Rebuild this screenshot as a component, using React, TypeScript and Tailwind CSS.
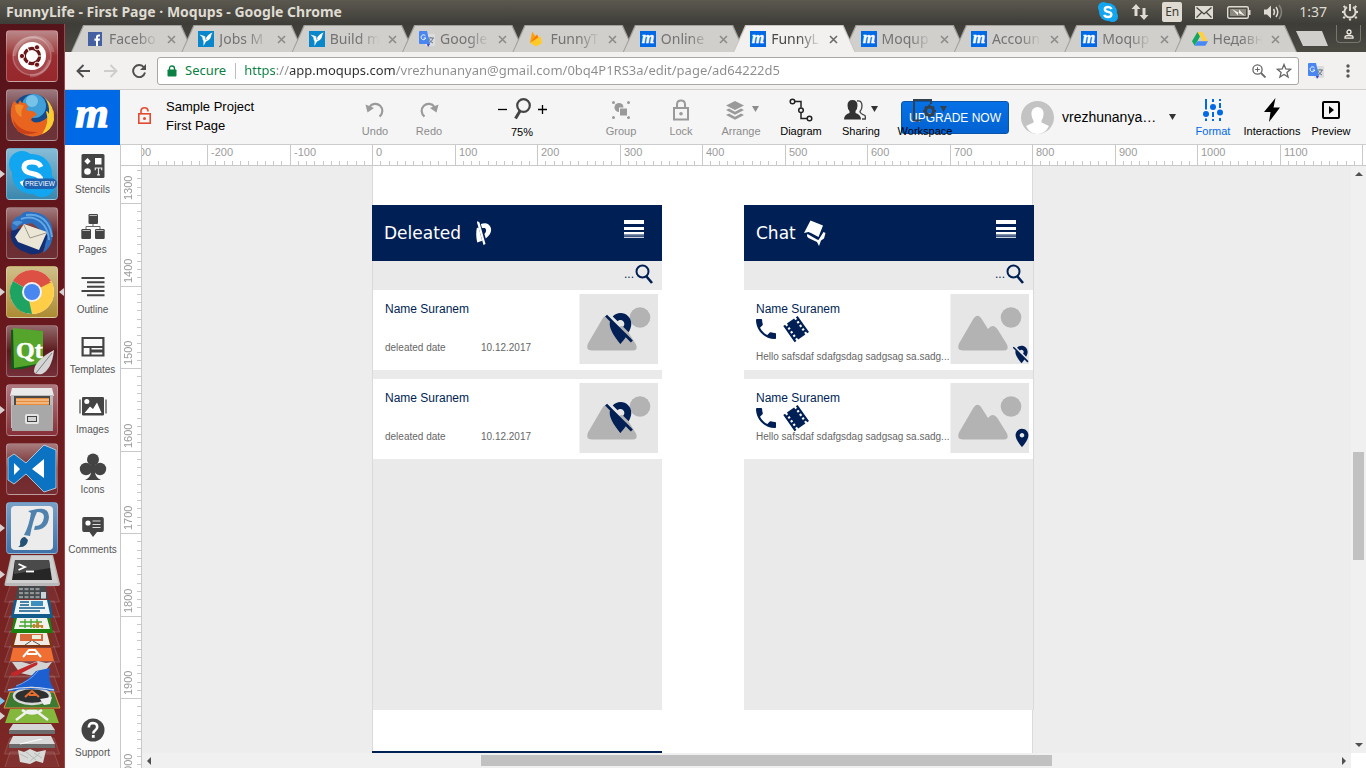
import React from "react";

/* ---------- shared glyphs ---------- */

const PIN_OFF =
  "M12 6.5c1.38 0 2.5 1.12 2.5 2.5 0 .74-.33 1.39-.83 1.85l3.63 3.63c.98-1.86 1.7-3.8 1.7-5.48 0-3.87-3.13-7-7-7-1.98 0-3.76.83-5.04 2.15l3.19 3.19c.46-.52 1.11-.84 1.85-.84zm4.37 9.6l-4.63-4.63-.11-.11L3.27 3 2 4.27l3.18 3.18C5.07 7.95 5 8.47 5 9c0 5.25 7 13 7 13s1.67-1.85 3.38-4.35L18.73 21 20 19.73l-3.63-3.63z";
const PIN_ON =
  "M12 2C8.13 2 5 5.13 5 9c0 5.25 7 13 7 13s7-7.75 7-13c0-3.87-3.13-7-7-7zm0 9.5c-1.38 0-2.5-1.12-2.5-2.5s1.12-2.5 2.5-2.5 2.5 1.12 2.5 2.5-1.12 2.5-2.5 2.5z";
const PHONE =
  "M6.62 10.79c1.44 2.83 3.76 5.14 6.59 6.59l2.2-2.2c.27-.27.67-.36 1.02-.24 1.12.37 2.33.57 3.57.57.55 0 1 .45 1 1V20c0 .55-.45 1-1 1-9.39 0-17-7.61-17-17 0-.55.45-1 1-1h3.5c.55 0 1 .45 1 1 0 1.25.2 2.45.57 3.57.11.35.03.74-.25 1.02l-2.2 2.2z";
const FILM =
  "M18 3v2h-2V3H8v2H6V3H4v18h2v-2h2v2h8v-2h2v2h2V3h-2zM8 17H6v-2h2v2zm0-4H6v-2h2v2zm0-4H6V7h2v2zm10 8h-2v-2h2v2zm0-4h-2v-2h2v2zm0-4h-2V7h2v2z";

function MIcon() {
  return (
    <svg viewBox="0 0 16 16" className="size-4 shrink-0" aria-hidden="true">
      <rect width="16" height="16" fill="#0069e5" />
      <text
        x="8"
        y="12"
        textAnchor="middle"
        fontSize="16"
        fontWeight="bold"
        fontStyle="italic"
        fill="#fff"
        stroke="#fff"
        strokeWidth=".4"
        fontFamily="Liberation Serif, serif"
      >
        m
      </text>
    </svg>
  );
}

function TranslateIcon() {
  return (
    <svg viewBox="0 0 16 16" className="size-4 shrink-0" aria-hidden="true">
      <rect x="6" y="3" width="10" height="12" rx="1" fill="#dcdcdc" />
      <path d="M9 7h6M12 6v1M10 12q3-1 4-5M10 8q1 3 4 4" stroke="#6b7b85" fill="none" />
      <path d="M1 0h7l3 13H1Q0 13 0 12V1Q0 0 1 0Z" fill="#4a86f0" />
      <path d="M8 13h3l-2 3Z" fill="#3246c8" />
      <path d="M6.4 4.8A2.4 2.4 0 1 0 6.8 7H4.7" stroke="#fff" fill="none" />
    </svg>
  );
}

function FacebookIcon() {
  return (
    <svg viewBox="0 0 14 14" className="size-[14px] shrink-0" aria-hidden="true">
      <rect width="14" height="14" fill="#4560a0" />
      <path d="M8 14V8.7H6.4V6.6H8V5.2Q8 2.6 10.6 2.6H12v2h-1.2Q10 4.6 10 5.5v1.1h2l-.3 2.1H10V14Z" fill="#fff" />
    </svg>
  );
}

function FreelancerIcon() {
  return (
    <svg viewBox="0 0 16 16" className="size-4 shrink-0" aria-hidden="true">
      <rect width="16" height="16" fill="#0a87ca" />
      <path d="M1.5 3.5L7 5.2L8 7Q10 3 14.5 1.5L13.5 3.5L12.5 7Q11 10 8 10.5L5.5 15V10Q4 8 4.5 6.5Z" fill="#fff" />
      <path d="M7 5.5L8.2 9" stroke="#0a87ca" strokeWidth=".7" />
    </svg>
  );
}

function FirebaseIcon() {
  return (
    <svg viewBox="0 0 14 16" className="h-4 w-[14px] shrink-0" aria-hidden="true">
      <path d="M1 12L3.2 .8L7 6Z" fill="#ffa000" />
      <path d="M1 12L8 3.5L10 7.5Z" fill="#f57c00" />
      <path d="M1 12L11.5 5L13 12.2L7 15.6Z" fill="#ffca28" />
    </svg>
  );
}

function DriveIcon() {
  return (
    <svg viewBox="0 0 16 14" className="h-[14px] w-4 shrink-0" aria-hidden="true">
      <path d="M5.4 0h5.2L16 9.2h-5.3Z" fill="#ffcf48" />
      <path d="M5.4 0L8 4.6L2.7 13.8L0 9.2Z" fill="#11a861" />
      <path d="M5.4 9.2H16l-2.7 4.6H2.7Z" fill="#4688f4" />
    </svg>
  );
}

/* ---------- desktop panel ---------- */

function TopPanel() {
  return (
    <header className="flex h-6 shrink-0 items-center bg-linear-to-b from-[#5b594f] to-[#3e3d38] px-[6px] text-[#dfdbd2]">
      <h1 className="font-['Noto_Sans',sans-serif] text-[14px] leading-6 font-bold">
        FunnyLife - First Page · Moqups - Google Chrome
      </h1>
      <div className="ml-auto flex items-center">
        <svg viewBox="0 0 22 22" className="size-[22px]" aria-hidden="true">
          <circle cx="11" cy="11" r="9" fill="#12a5f0" />
          <circle cx="6.5" cy="6.5" r="5.5" fill="#12a5f0" />
          <circle cx="15.5" cy="15.5" r="5.5" fill="#12a5f0" />
          <path
            d="M14.6 8Q13.5 6 11 6Q7.8 6 7.8 8.3Q7.8 10.3 11 10.9Q14.4 11.5 14.4 13.6Q14.4 16 11 16Q8 16 7.2 13.8"
            fill="none"
            stroke="#fff"
            strokeWidth="2.4"
          />
        </svg>
        <svg viewBox="0 0 18 16" className="ml-[12px] h-4 w-[18px]" fill="#dfdbd2" aria-hidden="true">
          <path d="M5 0L9.5 5H6.5V12H3.5V5H.5Z" />
          <path d="M13 16L8.5 11H11.5V4H14.5V11H17.5Z" />
        </svg>
        <span className="ml-[13px] grid h-5 w-5 place-items-center rounded-[2px] bg-[#dfdbd2] font-['Noto_Sans',sans-serif] text-[12px] leading-5 text-[#3c3b37]">
          En
        </span>
        <svg viewBox="0 0 18 13" className="ml-[13px] h-[13px] w-[18px]" aria-hidden="true">
          <rect width="18" height="13" fill="#dfdbd2" />
          <path d="M1.5 1.5L9 8L16.5 1.5M1.5 11.5L6.5 6.5M16.5 11.5L11.5 6.5" fill="none" stroke="#45443f" strokeWidth="1.2" />
        </svg>
        <svg viewBox="0 0 25 13" className="ml-[14px] h-[13px] w-[25px]" aria-hidden="true">
          <rect x=".7" y=".7" width="20.6" height="11.6" rx="1.5" fill="none" stroke="#dfdbd2" strokeWidth="1.4" />
          <rect x="3" y="3" width="16" height="7" fill="#8b8980" />
          <path d="M22.5 4v5" stroke="#dfdbd2" strokeWidth="2" />
          <path d="M5 3L12 7V3.5L18 10L11 6.8V9.5Z" fill="#f5f2ea" />
        </svg>
        <svg viewBox="0 0 20 16" className="ml-[12px] h-4 w-5" fill="none" stroke="#dfdbd2" aria-hidden="true">
          <path d="M0 5.5H3L7 1.5V14.5L3 10.5H0Z" fill="#dfdbd2" stroke="none" />
          <path d="M9.5 5Q11.5 8 9.5 11" strokeWidth="1.5" />
          <path d="M12 3Q15.5 8 12 13" strokeWidth="1.5" />
          <path d="M15 1Q20 8 15 15" strokeWidth="1.5" stroke="#85837a" />
        </svg>
        <time className="ml-[15px] font-['Noto_Sans',sans-serif] text-[14px] leading-6">1:37</time>
        <svg viewBox="0 0 18 18" className="mr-px ml-[14px] size-[18px]" fill="none" stroke="#dfdbd2" aria-hidden="true">
          <path d="M6 4.2A5.6 5.6 0 1 0 12 4.2" strokeWidth="2" />
          <path d="M9 1V8" strokeWidth="2" />
          <path
            d="M9 15.5v2M3.8 13.8l-1.5 1.5M14.2 13.8l1.5 1.5M1 9h2M15 9h2M2.7 3l1.5 1.5M15.3 3l-1.5 1.5"
            strokeWidth="2.2"
          />
        </svg>
      </div>
    </header>
  );
}

/* ---------- launcher ---------- */

type TileProps = { name: string; bg: string; running?: boolean; active?: boolean; children: React.ReactNode };

function Tile({ name, bg, running, active, children }: TileProps) {
  return (
    <li className="relative flex h-[52px] shrink-0 justify-center">
      {running && (
        <span className="absolute top-[22px] left-0 border-y-4 border-l-5 border-y-transparent border-l-[#d8d0d0]" />
      )}
      {active && (
        <span className="absolute top-[22px] right-0 border-y-4 border-r-5 border-y-transparent border-r-[#d8d0d0]" />
      )}
      <button aria-label={name} className={`h-[52px] w-[52px] overflow-hidden rounded-[4px] border border-white/25 ${bg}`}>
        <svg viewBox="1 1 50 50" className="block size-[50px]" aria-hidden="true">
          {children}
        </svg>
      </button>
    </li>
  );
}

function LauncherStack() {
  return (
    <svg viewBox="0 0 64 213" className="h-[213px] w-16 shrink-0" aria-hidden="true">
      <g fill="#ffffff" fillOpacity=".05" stroke="#ffffff" strokeOpacity=".15">
        {[32, 47, 62, 77, 92, 107, 122, 137, 184, 198].map((y) => (
          <path key={y} d={`M10 ${y}H54L59.5 ${y + 16}H4.5Z`} />
        ))}
      </g>
      <path d="M11 1H53L60 30Q60 32 58 32H6Q4 32 4.5 30Z" fill="#b9b9b9" />
      <path d="M12 2H52L58 29H6Z" fill="#cfcfcf" />
      <path d="M15 6H49L52 26H12Z" fill="#262626" />
      <path d="M15 6H49L50 14L14 20Z" fill="#4a4a4a" />
      <path d="M18.5 10L25 13L18.5 16" stroke="#fff" strokeWidth="1.8" fill="none" />
      <path d="M26 17.5H34" stroke="#fff" strokeWidth="1.8" />
      <path d="M18 32H46L48 45H15Z" fill="#45484a" />
      <g fill="#8f9496">
        {[19, 24.5, 30, 35.5].map((x) => (
          <React.Fragment key={x}>
            <rect x={x} y="34" width="4" height="2.2" />
            <rect x={x} y="38" width="4" height="2.2" />
            <rect x={x} y="42" width="4" height="2.2" />
          </React.Fragment>
        ))}
        <rect x="41" y="38" width="5" height="6.5" fill="#c9d3dc" />
      </g>
      <path d="M14 46H50L53 64H11Z" fill="#125c8c" />
      <path d="M17 46H47L50 60H14Z" fill="#eef3f6" />
      <path d="M20 48H29M20 51H29M19 54H45M19 57H40" stroke="#125c8c" strokeWidth="1.4" />
      <rect x="31" y="47" width="12" height="5" fill="#3e8fbd" />
      <path d="M14 64H50L53 79H11Z" fill="#1a8110" />
      <path d="M17 64H47L50 75H14Z" fill="#f1f1ee" />
      <path d="M20 68H42M19 72H42M25 65V74M31 65V74M37 65V74" stroke="#43a52f" strokeWidth="1.3" />
      <path d="M34 74V70M38 74V68M42 74V71" stroke="#e6731f" strokeWidth="2.2" />
      <path d="M14 79H50L53 93H11Z" fill="#7d3410" />
      <path d="M17 79H47L50 91H14Z" fill="#efebe4" />
      <rect x="20" y="80" width="23" height="7" fill="#d6683a" />
      <rect x="32" y="81" width="9" height="4" fill="#e9f0dc" />
      <path d="M31 87L25 91M33 87L40 91" stroke="#555" />
      <path d="M13 94H51L54 107H10Z" fill="#ee6f31" />
      <path d="M23 103L29 96H35L41 103M27 100H37" stroke="#fff" strokeWidth="2" fill="none" />
      <path d="M12 108L22 108L30 110L38 107L46 109L52 108L46 116L48 119L34 122L20 119Z" fill="#d3d3d3" />
      <path d="M11 119L34 109Q39 107 37 111L16 122Q11 123 11 119Z" fill="#c0282a" />
      <path d="M7 137Q26 129 36 117L50 114Q47 126 55 137Z" fill="#1c5fd0" />
      <path d="M16 132Q30 127 38 117" stroke="#6ea4f0" fill="none" />
      <path d="M8 136Q30 131 54 136" stroke="#bcd6f7" fill="none" strokeWidth="1.5" />
      <path d="M10 138H54L60 154H4Z" fill="#3d7a31" stroke="#e88f3c" />
      <ellipse cx="32" cy="142" rx="18" ry="8" fill="#2c3030" stroke="#d8d8d8" strokeWidth="2.5" />
      <path d="M25 143L32 137L39 143M29 141H36" stroke="#e86f30" strokeWidth="2" fill="none" />
      <path d="M40 145L52 143L50 150L44 151Z" fill="#eeeeee" />
      <path d="M7 137Q30 131 55 137Q30 133 7 137Z" fill="#1c5fd0" />
      <path d="M10 155H54L59 169H5Z" fill="#84b83c" />
      <path d="M16 166L28 157H36L48 166M22 156Q32 163 42 156" stroke="#f0f0f0" strokeWidth="2.6" fill="none" />
      <path d="M13 170H51L55 176H9Z" fill="#d5d5d5" />
      <path d="M9 176H55V180H9Z" fill="#6c6c6c" />
      <path d="M13 182H51L55 190H9Z" fill="#d9d9d9" />
      <path d="M9 190H55V194H9Z" fill="#6c6c6c" />
      <path d="M20 190L42 185" stroke="#fff" />
      <path d="M18 196L24 198L30 195L37 198L46 196L43 209L36 207L30 210L20 208Z" fill="#d8dad8" />
      <path d="M20 200L28 204M26 198L36 206M34 199L42 204M30 207L40 199" stroke="#b8bab8" />
      <path d="M0 16.500V24.500L5 20.500ZM0 158V166L5 162Z" fill="#d8d0d0" />
      <path d="M0 143V151L5 147Z" fill="#7fc8ee" />
    </svg>
  );
}

function Launcher() {
  return (
    <aside className="w-[65px] shrink-0 overflow-hidden border-r border-[#9a4a4a] bg-linear-to-b from-[#55131a] via-[#6d1a1e] to-[#7c2825]">
      <ul className="flex flex-col gap-[7px] pt-[6px]">
        <Tile name="Search" bg="bg-linear-to-b from-[#b9888a] via-[#9a2e32] to-[#96282c]">
          <circle cx="26" cy="26" r="19" fill="#fff" fillOpacity=".12" stroke="#fff" strokeOpacity=".25" strokeWidth="1.5" />
          <path d="M8 26Q12 8 30 7Q44 9 47 22M44 30Q38 46 24 46" fill="none" stroke="#fff" strokeOpacity=".2" strokeWidth="3" />
          <circle cx="26" cy="26" r="14" fill="#fff" />
          <circle cx="26" cy="26" r="7.5" fill="none" stroke="#6a1518" strokeWidth="3.4" />
          <g stroke="#fff" strokeWidth="1.2">
            <path d="M26 26L37 26M26 26L20.5 16.5M26 26L20.5 35.5" />
          </g>
          <circle cx="26" cy="26" r="5.8" fill="#fff" />
          <g fill="#6a1518" stroke="#fff" strokeWidth=".9">
            <circle cx="16" cy="26" r="2.6" />
            <circle cx="31" cy="17.3" r="2.6" />
            <circle cx="31" cy="34.7" r="2.6" />
          </g>
        </Tile>
        <Tile name="Firefox" bg="bg-linear-to-b from-[#9b7a80] via-[#6a3238] to-[#6c3438]">
          <circle cx="26" cy="26" r="21" fill="#174a8a" />
          <circle cx="28" cy="17" r="12" fill="#3f9fd6" />
          <circle cx="26" cy="12" r="6" fill="#8ed3ee" fillOpacity=".7" />
          <path
            d="M8 12L12 15L14 11L16 14Q20 13 22 18Q19 20 22 22Q28 21 31 26Q26 28 25 31Q29 36 38 31Q44 28 45 19L48 22Q49 38 37 45Q24 51 12 42Q3 33 5 20Q6 15 8 12Z"
            fill="#e8641f"
          />
          <path d="M9 16Q14 14 18 17Q14 22 16 28Q9 26 9 16Z" fill="#f08a2c" />
          <path d="M38 8Q49 17 48 31Q46 41 36 45Q44 34 40 22Q42 22 43 25Q44 15 38 8Z" fill="#f9cc33" />
          <path d="M7 30Q14 44 32 43Q20 48 12 42Q8 37 7 30Z" fill="#c9401a" />
        </Tile>
        <Tile name="Skype" bg="bg-linear-to-b from-[#86bcd6] to-[#3a87ad]" running>
          <circle cx="26" cy="26" r="20" fill="#12a5f0" />
          <circle cx="16" cy="16" r="13" fill="#12a5f0" />
          <circle cx="36" cy="36" r="13" fill="#12a5f0" />
          <path
            d="M35 19Q33 14 26 14Q18 14 18 19.500Q18 24 26 25.500Q35 27 35 32.500Q35 38 26 38Q18 38 16 33"
            fill="none"
            stroke="#fff"
            strokeWidth="5"
          />
          <rect x="17" y="30.500" width="34" height="10.500" rx="5" fill="#1e61ae" />
          <text x="34" y="38" textAnchor="middle" fontSize="6.500" fill="#fff" fontFamily="Liberation Sans, sans-serif">
            PREVIEW
          </text>
        </Tile>
        <Tile name="Thunderbird" bg="bg-linear-to-b from-[#a27c80] via-[#6a2a2e] to-[#6d3034]">
          <path d="M6 16Q9 9 14 9Q18 3 26 5Q42 6 46 20Q49 38 37 46Q41 36 38 26L26 16L14 18L8 25Q4 22 6 16Z" fill="#2b6fc0" />
          <path d="M5 24Q3 36 14 43L24 47Q32 48 37 44L42 28L20 20Z" fill="#132e72" />
          <path d="M9 30L18 17L41 25L33 43L12 35Z" fill="#ece6d6" />
          <path d="M18 18L24 31L40 26" fill="none" stroke="#9c988e" />
          <path d="M15 12Q26 8 35 15Q42 21 43 33M20 8Q34 6 41 16Q45 22 46 30" fill="none" stroke="#62a6e4" strokeWidth="2" />
          <path d="M6 16Q10 12 17 15L11 19Z" fill="#4f95da" />
        </Tile>
        <Tile name="Chrome" bg="bg-linear-to-b from-[#cfbf88] to-[#ac8b32]" running active>
          <circle cx="26" cy="26" r="22" fill="#fff" />
          <path d="M26 26L6.900 15A22 22 0 0 1 45 15Z" fill="#dd5144" />
          <path d="M26 26L45 15A22 22 0 0 1 26 48Z" fill="#ffcd46" />
          <path d="M26 26L26 48A22 22 0 0 1 6.900 15Z" fill="#1ea362" />
          <path d="M26 16H45.500L26 26Z" fill="#dd5144" />
          <path d="M35 31L26 48L22 30Z" fill="#ffcd46" />
          <circle cx="26" cy="26" r="10" fill="#f1f1f1" />
          <circle cx="26" cy="26" r="8" fill="#4a86f0" />
        </Tile>
        <Tile name="Qt Creator" bg="bg-linear-to-b from-[#93696c] via-[#5c1a1e] to-[#74303a]">
          <path d="M5 5L36 6V38L16 44L5 44Z" fill="#0f5c18" />
          <path d="M7 3L37 6V38L8 43Z" fill="#55a52c" />
          <text x="10" y="33" fontSize="24" fontWeight="bold" fill="#fff" stroke="#fff" strokeWidth=".5" fontFamily="Liberation Serif, serif">
            Qt
          </text>
          <path d="M48 25Q46 44 36 49Q28 50 28 46Q28 36 48 25Z" fill="#d5d5d5" />
          <path d="M46 28L30 48" stroke="#808080" />
        </Tile>
        <Tile name="Files" bg="bg-linear-to-b from-[#ad7a80] to-[#86303a]" running>
          <path d="M6 4H46L48 12H4Z" fill="#e9e9e9" />
          <path d="M5 11H47V44H5Z" fill="#bdbdbd" />
          <rect x="8" y="12" width="36" height="10" fill="#494949" />
          <path d="M10 14H43V21H10Z" fill="#e88b3a" />
          <path d="M10 16H43M10 19H43" stroke="#fbe1c0" strokeWidth="1.2" />
          <path d="M6 21H46L47 47H6Z" fill="#a8a8a8" />
          <rect x="19" y="30" width="14" height="10" rx="2" fill="#e4e4e4" />
          <rect x="21.5" y="32.5" width="9" height="5" fill="#d2d2d2" stroke="#444" />
        </Tile>
        <Tile name="Visual Studio Code" bg="bg-linear-to-b from-[#a87c7e] via-[#6e282b] to-[#762e32]">
          <path
            d="M2 15L8 11L20 20L38 2L50 7V45L38 49L20 31L8 41L2 37Z"
            fill="#0b73c2"
            stroke="#cfdfea"
            strokeWidth=".8"
          />
          <path d="M8 20V32L14 26ZM38 16L26 26L38 35Z" fill="#fff" />
        </Tile>
        <Tile name="Pencil" bg="bg-linear-to-b from-[#79a0c6] to-[#3f72a8]" running>
          <rect x="5" y="4" width="42" height="44" rx="4" fill="#ececec" />
          <path d="M22 9L31 7Q43 5 43 15Q42 28 28 28L29 24Q37 24 38 15Q38 10 31 10Q27 18 24 34L18 33Q23 24 25 11Z" fill="#4f82ac" />
          <path d="M12 45Q15 44 14 40Q15 35 19 35L22 38Q21 46 12 45Z" fill="#245174" />
        </Tile>
      </ul>
      <LauncherStack />
    </aside>
  );
}

/* ---------- browser chrome ---------- */

const TABS: { title: string; icon: React.ReactNode; active?: boolean }[] = [
  { title: "Facebo", icon: <FacebookIcon /> },
  { title: "Jobs M", icon: <FreelancerIcon /> },
  { title: "Build m", icon: <FreelancerIcon /> },
  { title: "Google", icon: <TranslateIcon /> },
  { title: "FunnyT", icon: <FirebaseIcon /> },
  { title: "Online", icon: <MIcon /> },
  { title: "FunnyL", icon: <MIcon />, active: true },
  { title: "Moqup", icon: <MIcon /> },
  { title: "Accoun", icon: <MIcon /> },
  { title: "Moqup", icon: <MIcon /> },
  { title: "Недавн", icon: <DriveIcon /> },
];

function TabStrip() {
  return (
    <div className="flex h-7 shrink-0 items-end bg-linear-to-b from-[#3e3d38] to-[#4b4a43] pl-[6px]">
      <ul className="flex w-[1214px] min-w-0">
        {TABS.map((t, i) => (
          <li
            key={i}
            className={`relative -mr-[12px] h-[27px] flex-1 pt-px [clip-path:polygon(0_100%,12px_0,calc(100%-12px)_0,100%_100%)] ${
              t.active ? "z-10 bg-[#c9c7c3]" : "bg-[#a19f9a]"
            }`}
          >
            <div
              className={`flex h-full items-center pl-[17px] [clip-path:polygon(1px_100%,13px_0,calc(100%-13px)_0,calc(100%-1px)_100%)] ${
                t.active ? "bg-[#f2f1f0]" : "bg-[#d1cfcc]"
              }`}
            >
              <span className="flex w-[21px] shrink-0 items-center">{t.icon}</span>
              <a
                href="#tab"
                className={`w-[52px] font-['Noto_Sans',sans-serif] text-[14px] leading-6 whitespace-nowrap [mask-image:linear-gradient(to_right,black_55%,transparent_95%)] ${
                  t.active ? "text-[#4a4a4a]" : "text-[#737373]"
                }`}
              >
                {t.title}
              </a>
              <button aria-label="Close tab" className="ml-[6px]">
                <svg viewBox="0 0 9 9" className="size-[9px]" aria-hidden="true">
                  <path d="M1 1L8 8M8 1L1 8" stroke={t.active ? "#6b6b6b" : "#8c8c8c"} strokeWidth="1.6" />
                </svg>
              </button>
            </div>
          </li>
        ))}
      </ul>
      <button
        aria-label="New tab"
        className="mb-[6px] ml-[11px] h-[15px] w-[32px] shrink-0 bg-[#d1cfcc] [clip-path:polygon(0_0,26px_0,100%_100%,7px_100%)]"
      />
      <button
        aria-label="Profile"
        className="mr-[5px] mb-[9px] ml-auto grid h-[18px] w-[25px] shrink-0 place-items-center rounded-b-[4px] border border-t-0 border-[#77756c]"
      >
        <svg viewBox="0 0 10 10" className="size-[10px]" fill="none" stroke="#efece4" aria-hidden="true">
          <circle cx="5" cy="3" r="2" strokeWidth="1.3" />
          <path d="M1 9.200V8Q1 6.500 5 6.500Q9 6.500 9 8V9.200Z" strokeWidth="1.3" />
        </svg>
      </button>
    </div>
  );
}

function AddressBar() {
  return (
    <div className="flex h-[38px] shrink-0 items-center border-b border-[#cfcdca] bg-[#f2f1f0] pl-[11px]">
      <button aria-label="Back">
        <svg viewBox="0 0 14 14" className="size-[14px]" fill="none" stroke="#4f4f4f" strokeWidth="1.9" aria-hidden="true">
          <path d="M14 7H1.500M7.500 1L1.500 7L7.500 13" />
        </svg>
      </button>
      <button aria-label="Forward" className="ml-[14px]">
        <svg viewBox="0 0 14 14" className="size-[14px]" fill="none" stroke="#cfcdcb" strokeWidth="1.9" aria-hidden="true">
          <path d="M0 7H12.500M6.500 1L12.500 7L6.500 13" />
        </svg>
      </button>
      <button aria-label="Reload" className="ml-[14px]">
        <svg viewBox="0 0 14 14" className="size-[14px]" fill="none" stroke="#4f4f4f" strokeWidth="1.9" aria-hidden="true">
          <path d="M12 3.500A6 6 0 1 0 13 8.500" />
          <path d="M14 0V6H8Z" fill="#4f4f4f" stroke="none" />
        </svg>
      </button>
      <div className="ml-[11px] flex h-7 min-w-0 flex-1 items-center rounded-[3px] border border-[#aaa8a4] bg-white pr-[6px] pl-2">
        <svg viewBox="0 0 10 12" className="ml-px h-3 w-[10px] shrink-0" aria-hidden="true">
          <path d="M2.500 5V3.500Q2.500 1 5 1Q7.500 1 7.500 3.500V5" fill="none" stroke="#0b8043" strokeWidth="1.4" />
          <rect x=".5" y="4.500" width="9" height="7" rx=".8" fill="#0b8043" />
        </svg>
        <span className="ml-[8px] font-['Noto_Sans',sans-serif] text-[13px] text-[#0b8043]">Secure</span>
        <span className="ml-[9px] h-4 w-px bg-[#bdbdbd]" />
        <input
          aria-label="Address"
          defaultValue="https://app.moqups.com/vrezhunanyan@gmail.com/0bq4P1RS3a/edit/page/ad64222d5"
          className="ml-[8px] min-w-0 flex-1 bg-[linear-gradient(to_right,#0b8043_32px,#8c8c8c_32px,#8c8c8c_45px,#2e2e2e_45px,#2e2e2e_151px,#8c8c8c_151px)] bg-clip-text font-['Noto_Sans',sans-serif] text-[13px] text-transparent outline-none"
        />
        <button aria-label="Zoom">
          <svg viewBox="0 0 14 14" className="size-[14px]" fill="none" stroke="#666" strokeWidth="1.3" aria-hidden="true">
            <circle cx="5.500" cy="5.500" r="4.600" />
            <path d="M9 9L13.500 13.500" strokeWidth="1.8" />
            <path d="M3.200 5.500H7.800M5.500 3.200V7.800" strokeWidth="1" />
          </svg>
        </button>
        <button aria-label="Bookmark" className="ml-[10px]">
          <svg viewBox="0 0 16 16" className="size-4" fill="none" stroke="#666" strokeWidth="1.3" aria-hidden="true">
            <path d="M8 1.500L9.800 6L14.600 6.300L10.900 9.400L12.100 14L8 11.500L3.900 14L5.100 9.400L1.400 6.300L6.200 6Z" />
          </svg>
        </button>
      </div>
      <button aria-label="Translate" className="ml-[9px]">
        <TranslateIcon />
      </button>
      <button aria-label="Menu" className="mr-[16px] ml-[22px]">
        <svg viewBox="0 0 4 14" className="h-[14px] w-1" fill="#555" aria-hidden="true">
          <circle cx="2" cy="2" r="1.700" />
          <circle cx="2" cy="7" r="1.700" />
          <circle cx="2" cy="12" r="1.700" />
        </svg>
      </button>
    </div>
  );
}

/* ---------- app header ---------- */

function Caret({ className = "" }: { className?: string }) {
  return (
    <svg viewBox="0 0 7 6" className={`h-[6px] w-[7px] ${className}`} fill="currentColor" aria-hidden="true">
      <path d="M0 0H7L3.500 6Z" />
    </svg>
  );
}

function ScrollArrow({ className = "" }: { className?: string }) {
  return (
    <svg viewBox="0 0 8 4" className={`h-1 w-2 ${className}`} fill="currentColor" aria-hidden="true">
      <path d="M0 0H8L4 4Z" />
    </svg>
  );
}

type ToolProps = { label: string; width?: string; tone?: string; children: React.ReactNode };

function Tool({ label, width = "w-[60px]", tone = "text-black", children }: ToolProps) {
  return (
    <button className={`flex shrink-0 flex-col items-center pt-[7px] ${width} ${tone}`}>
      <span className="relative flex h-[26px] items-center justify-center">{children}</span>
      <span className="text-[11px] leading-4">{label}</span>
    </button>
  );
}

function AppHeader() {
  return (
    <header className="flex h-[55px] shrink-0 border-b border-[#cccccc] bg-[#f5f5f5]">
      <a href="#home" aria-label="Home" className="h-[55px] w-[55px] shrink-0">
        <svg viewBox="0 0 55 55" className="size-[55px]" aria-hidden="true">
          <rect width="55" height="55" fill="#0069e5" />
          <text
            x="27"
            y="37"
            textAnchor="middle"
            fontSize="43"
            fontWeight="bold"
            fontStyle="italic"
            fill="#fff"
            stroke="#fff"
            strokeWidth="1.4"
            fontFamily="Liberation Serif, serif"
          >
            m
          </text>
        </svg>
      </a>
      <div className="flex w-[228px] shrink-0 items-center pl-[18px]">
        <svg viewBox="0 0 13 17" className="-mt-1 h-[17px] w-[13px]" fill="none" stroke="#e5492f" strokeWidth="1.6" aria-hidden="true">
          <rect x=".8" y="6.800" width="11.400" height="9.400" />
          <path d="M3 6.500V3.500Q3.500 .8 6.500 .8Q9.500 .8 10 3.500V4.500" />
          <circle cx="6.500" cy="11.500" r="1.500" fill="#e5492f" stroke="none" />
        </svg>
        <p className="-mt-[2px] ml-[15px] text-[13px] leading-[19px] text-black">
          Sample Project
          <br />
          First Page
        </p>
      </div>
      <Tool label="Undo" width="w-[54px]" tone="text-[#8c8c8c]">
        <svg viewBox="0 0 20 18" className="h-[18px] w-5" aria-hidden="true">
          <path d="M4.500 6A7 7 0 1 1 14.500 15.500" fill="none" stroke="#9a9a9a" strokeWidth="2.2" />
          <path d="M.5 3.500L9 7L2.500 11.500Z" fill="#9a9a9a" />
        </svg>
      </Tool>
      <Tool label="Redo" width="w-[54px]" tone="text-[#8c8c8c]">
        <svg viewBox="0 0 20 18" className="h-[18px] w-5" aria-hidden="true">
          <path d="M15.500 6A7 7 0 1 0 5.500 15.500" fill="none" stroke="#9a9a9a" strokeWidth="2.2" />
          <path d="M19.500 3.500L11 7L17.500 11.500Z" fill="#9a9a9a" />
        </svg>
      </Tool>
      <div className="flex w-[132px] shrink-0 flex-col items-center pt-[6px] text-black">
        <div className="flex h-[26px] items-center gap-[7px]">
          <button aria-label="Zoom out">
            <svg viewBox="0 0 9 9" className="size-[9px]" aria-hidden="true">
              <path d="M0 4.500H9" stroke="#000" strokeWidth="1.3" />
            </svg>
          </button>
          <button aria-label="Zoom tool">
            <svg viewBox="0 0 17 22" className="h-[22px] w-[17px]" fill="none" stroke="#444" aria-hidden="true">
              <circle cx="9.500" cy="7.500" r="6.300" strokeWidth="2.2" />
              <path d="M6 13L1.500 20.500" strokeWidth="3" />
            </svg>
          </button>
          <button aria-label="Zoom in">
            <svg viewBox="0 0 9 9" className="size-[9px]" aria-hidden="true">
              <path d="M0 4.500H9M4.500 0V9" stroke="#000" strokeWidth="1.3" />
            </svg>
          </button>
        </div>
        <span className="mt-[2px] text-[11px] leading-4">75%</span>
      </div>
      <div className="ml-[3px] flex">
        <Tool label="Group" tone="text-[#8c8c8c]">
          <svg viewBox="0 0 18 18" className="size-[18px]" fill="#9a9a9a" aria-hidden="true">
            <circle cx="1.500" cy="1.500" r="1.500" />
            <circle cx="16.500" cy="1.500" r="1.500" />
            <circle cx="1.500" cy="16.500" r="1.500" />
            <circle cx="16.500" cy="16.500" r="1.500" />
            <circle cx="7" cy="6.500" r="4.500" />
            <rect x="7.500" y="7" width="8" height="8" stroke="#f5f5f5" strokeWidth="1" />
          </svg>
        </Tool>
        <Tool label="Lock" tone="text-[#8c8c8c]">
          <svg viewBox="0 0 16 22" className="h-[22px] w-4" fill="none" stroke="#9a9a9a" strokeWidth="2" aria-hidden="true">
            <rect x="1" y="9" width="14" height="11.500" />
            <path d="M4 8.500V5Q4.300 1.500 8 1.500Q11.700 1.500 12 5V8.500" />
            <circle cx="8" cy="14.700" r="1.800" fill="#9a9a9a" stroke="none" />
          </svg>
        </Tool>
        <Tool label="Arrange" tone="text-[#8c8c8c]">
          <svg viewBox="0 0 20 19" className="mr-[7px] ml-[2px] h-[19px] w-5" fill="#9a9a9a" aria-hidden="true">
            <path d="M10 0L19 4.500L10 9L1 4.500Z" />
            <path d="M1 9L4 7.600L10 10.800L16 7.600L19 9L10 13.700Z" />
            <path d="M1 14L4 12.500L10 15.700L16 12.500L19 14L10 18.800Z" />
          </svg>
          <Caret className="-mt-[2px]" />
        </Tool>
        <Tool label="Diagram">
          <svg viewBox="0 0 24 24" className="size-6" fill="none" stroke="#222" strokeWidth="1.5" aria-hidden="true">
            <path d="M6 3.500H12V9.500M12 15V20.500H18" />
            <circle cx="3.500" cy="3.500" r="2.300" />
            <circle cx="12" cy="12.300" r="2.300" />
            <circle cx="20.500" cy="20.500" r="2.300" />
          </svg>
        </Tool>
        <Tool label="Sharing">
          <svg viewBox="0 0 22 20" className="mr-[5px] h-5 w-[22px]" aria-hidden="true">
            <path
              d="M13 1Q18 0 18 6Q18 9 16 11.500Q16 13.500 21 15.500Q21.500 17 21.300 19H18"
              fill="none"
              stroke="#444"
              strokeWidth="1.3"
            />
            <path
              d="M8.500 0Q13.500 0 13.500 5.500Q13.500 9 11.500 11V13Q17 14.500 17 19.500H0Q0 14.500 5.500 13V11Q3.500 9 3.500 5.500Q3.500 0 8.500 0Z"
              fill="#333"
            />
          </svg>
          <Caret className="-mt-[2px] text-[#333]" />
        </Tool>
      </div>
      <div className="relative ml-[10px] flex shrink-0 pt-[11px]">
        <button className="h-[33px] w-[108px] rounded-[3px] border border-[#0a55a8] bg-linear-to-b from-[#0671e6] to-[#0262d2] text-[12px] whitespace-nowrap text-white">
          UPGRADE NOW
        </button>
        <div className="absolute top-0 -left-[6px]">
          <Tool label="Workspace">
            <svg viewBox="0 0 25 23" className="mr-[2px] h-[23px] w-[25px]" aria-hidden="true">
              <path d="M19 5V1H2V21.500H9" fill="none" stroke="#33414f" strokeWidth="2" />
              <circle cx="17.500" cy="12" r="4" fill="none" stroke="#33414f" strokeWidth="3" />
              <path
                d="M17.500 5.500v2M17.500 16.500v2M11 12h2M22 12h2M13 7.500l1.300 1.300M20.700 15.200l1.300 1.300M13 16.500l1.300-1.300M20.700 8.800L22 7.500"
                stroke="#33414f"
                strokeWidth="2.2"
              />
            </svg>
            <Caret className="absolute top-[9px] -right-[8px] text-[#33414f]" />
          </Tool>
        </div>
      </div>
      <button className="ml-3 flex shrink-0 items-center text-[14px] text-black">
        <svg viewBox="0 0 33 33" className="size-[33px]" aria-hidden="true">
          <circle cx="16.500" cy="16.500" r="16.500" fill="#c3c3c3" />
          <path d="M16.500 6Q23 6.500 22.500 14Q22 18 20.500 19.500V21.500L28 25Q24 33 16.500 33Q9 33 5 25L12.500 21.500V19.500Q11 18 10.500 14Q10 6.500 16.500 6Z" fill="#fff" />
        </svg>
        <span className="ml-2 w-[104px] text-left">vrezhunanya…</span>
        <Caret className="ml-[3px] text-[#333]" />
      </button>
      <div className="ml-auto flex pr-[5px]">
        <Tool label="Format" tone="text-[#0069e5]">
          <svg viewBox="0 0 20 22" className="h-[22px] w-5" aria-hidden="true">
            <path d="M3 0V10.500M3 19.500V22M10 0V3M10 13V18M10 20V22M17 0V2M17 4V9M17 19V22" stroke="#0069e5" strokeWidth="2" />
            <circle cx="3" cy="15" r="3" fill="#0069e5" />
            <circle cx="10" cy="8" r="3" fill="#0069e5" />
            <circle cx="17" cy="13.500" r="3" fill="#0069e5" />
          </svg>
        </Tool>
        <Tool label="Interactions" width="w-[58px]">
          <svg viewBox="0 0 16 24" className="h-6 w-4" aria-hidden="true">
            <path d="M11.500 0L0 14H6.500L5 24L16 9.500H9.500Z" />
          </svg>
        </Tool>
        <Tool label="Preview">
          <svg viewBox="0 0 18 18" className="size-[18px]" aria-hidden="true">
            <rect x="1" y="1" width="16" height="16" rx="1" fill="none" stroke="#000" strokeWidth="2" />
            <path d="M7 5L12 9L7 13Z" />
          </svg>
        </Tool>
      </div>
    </header>
  );
}

/* ---------- side navigation ---------- */

function NavItem({ label, children }: { label: string; children: React.ReactNode }) {
  return (
    <button className="flex h-[60px] shrink-0 flex-col items-center text-[#555]">
      <svg viewBox="0 0 24 24" className="size-6 overflow-visible" fill="#444" aria-hidden="true">
        {children}
      </svg>
      <span className="mt-1 text-[10px] leading-[14px]">{label}</span>
    </button>
  );
}

function SideNav() {
  return (
    <nav className="flex w-[55px] shrink-0 flex-col bg-[#fafafa] pt-[10px]">
      <NavItem label="Stencils">
        <rect x=".5" y="-1" width="23" height="24" rx="1.5" />
        <path d="M6.500 3L9.700 6.200L6.500 9.400L3.300 6.200Z" fill="#fff" />
        <rect x="14" y="3" width="6.500" height="6.500" fill="#fff" />
        <circle cx="6.500" cy="16.500" r="3.300" fill="#fff" />
        <path d="M14.300 15.300V13H20.700V15.300M17.500 13V19.500M16 19.800H19" stroke="#e8e8e8" fill="none" strokeWidth="1.2" />
      </NavItem>
      <NavItem label="Pages">
        <rect x="7.500" y="-1" width="9.500" height="10" rx="1.2" />
        <rect x=".3" y="14" width="9.700" height="10" rx="1.2" />
        <rect x="14" y="14" width="9.700" height="10" rx="1.2" />
        <path d="M12 9V11.500M5 14V11.500H19V14" stroke="#666" fill="none" />
        <path d="M8.500 .5H16M1.500 15.500H9M15 15.500H22.500" stroke="#bbb" />
      </NavItem>
      <NavItem label="Outline">
        <path d="M.5 3H23.500M6 7.300H23.500M6 11.700H23.500M.5 16H23.500M6 20.300H23.500" stroke="#444" strokeWidth="2" />
      </NavItem>
      <NavItem label="Templates">
        <path d="M.5 2H23.500V21.500H.5ZM2.700 4V11H21.300V4ZM2.700 13V19.500H8.500V13ZM10.500 13V14.500H21.300V13ZM10.500 17.500V19.500H21.300V17.500Z" fillRule="evenodd" />
      </NavItem>
      <NavItem label="Images">
        <rect x="1" y="2" width="22" height="18.500" rx="1.2" />
        <path d="M-1 4.500V18.500M25 4.500V18.500" stroke="#444" strokeWidth="1.2" />
        <circle cx="5.800" cy="6.500" r="2.500" fill="#fff" />
        <path d="M3.500 18L9 11.500L12 14L16 7.500L20.500 18Z" fill="#fff" />
      </NavItem>
      <NavItem label="Icons">
        <circle cx="12" cy="4.500" r="6" />
        <circle cx="5" cy="14" r="6.200" />
        <circle cx="19" cy="14" r="6.200" />
        <path d="M10 8H14V18Q15 23 20 25H4Q9 23 10 18Z" />
      </NavItem>
      <NavItem label="Comments">
        <path d="M3 2H21Q22.800 2 22.800 4V15Q22.800 17 21 17H16L12 22L8.500 17H3Q1.200 17 1.200 15V4Q1.200 2 3 2Z" />
        <circle cx="7" cy="8" r="2.600" fill="#fff" />
        <path d="M11.500 6H19.500M11.500 9.500H19.500M11.500 12.500H19.500" stroke="#ddd" strokeWidth="1.2" />
      </NavItem>
      <div className="mt-auto -mb-[10px] flex flex-col">
        <NavItem label="Support">
          <circle cx="12" cy="12" r="11.500" />
          <path d="M7.800 9.500Q8 5 12 5Q16.200 5.200 16.200 9Q16.200 10.800 14 12.500Q12.300 13.700 12.300 15.500" fill="none" stroke="#fff" strokeWidth="2.6" />
          <rect x="10.900" y="17" width="2.800" height="2.800" fill="#fff" />
        </NavItem>
      </div>
    </nav>
  );
}

/* ---------- rulers ---------- */

const UNIT = 0.825;
const ORIGIN_X = 231;
const ORIGIN_Y = 37;

const hTicks = Array.from({ length: 151 }, (_, i) => -300 + i * 10);
const vTicks = Array.from({ length: 76 }, (_, i) => 1260 + i * 10);

function TopRuler() {
  return (
    <div className="flex h-[21px] shrink-0 border-b border-[#c9c9c9] bg-white">
      <div className="w-[22px] shrink-0 border-x border-[#c9c9c9]" />
      <div className="relative flex-1 overflow-hidden text-[11px] leading-[14px] text-[#9b9b9b]">
        {hTicks.map((v) => {
          const left = Math.round(ORIGIN_X - 1 + v * UNIT);
          return v % 100 === 0 ? (
            <span key={v} className="absolute top-0 h-5 border-l border-[#c9c9c9] pl-[3px]" style={{ left }}>
              {v}
            </span>
          ) : (
            <span key={v} className="absolute bottom-0 h-1 w-px bg-[#c9c9c9]" style={{ left }} />
          );
        })}
      </div>
    </div>
  );
}

function LeftRuler() {
  return (
    <div className="relative w-[22px] shrink-0 overflow-hidden border-x border-[#c9c9c9] bg-white text-[11px] leading-[14px] text-[#9b9b9b]">
      {vTicks.map((v) => {
        const top = Math.round(ORIGIN_Y + (v - 1300) * UNIT);
        return v % 100 === 0 ? (
          <React.Fragment key={v}>
            <span className="absolute left-0 h-px w-5 bg-[#c9c9c9]" style={{ top }} />
            <span className="absolute left-0 h-8 rotate-180 [writing-mode:vertical-rl]" style={{ top: top - 35 }}>
              {v}
            </span>
          </React.Fragment>
        ) : (
          <span key={v} className="absolute right-0 h-px w-1 bg-[#c9c9c9]" style={{ top }} />
        );
      })}
    </div>
  );
}

/* ---------- canvas ---------- */

function Thumb({ children }: { children?: React.ReactNode }) {
  return (
    <svg viewBox="0 0 79 70" className="mt-1 mr-1 ml-auto h-[70px] w-[79px] shrink-0 self-start overflow-visible" aria-hidden="true">
      <rect x=".5" width="78.500" height="70" fill="#e6e6e6" />
      <circle cx="61" cy="23.500" r="10.300" fill="#b3b3b3" />
      <path
        d="M23 25.500Q27.500 18 32 25.500L38 35Q43 28.500 48 36L57 50.500Q59.500 56.500 53.500 56.500H13Q6 56 9 49.500Z"
        fill="#b3b3b3"
      />
      {children}
    </svg>
  );
}

function Screen({ title, icon, edge, children }: { title: string; icon: React.ReactNode; edge: string; children: React.ReactNode }) {
  return (
    <section className="flex h-[505px] w-[290px] shrink-0 flex-col">
      <header className="flex h-14 shrink-0 items-center bg-[#001f54] pr-[18px] pl-3 text-white">
        <h2 className="font-['DejaVu_Sans',sans-serif] text-[17px] leading-6">{title}</h2>
        {icon}
        <button aria-label="Open menu" className="-mt-2 ml-auto">
          <svg viewBox="0 0 20 18" className="h-[18px] w-5" fill="#fff" aria-hidden="true">
            <rect width="20" height="4" />
            <rect y="7" width="20" height="3" />
            <rect y="12" width="20" height="2.500" />
            <rect y="15.300" width="20" height=".7" fillOpacity=".5" />
            <rect y="16.700" width="20" height="1.300" fillOpacity=".8" />
          </svg>
        </button>
      </header>
      <div className={`flex-1 border-[#dadada] bg-[#eaeaea] ${edge}`}>
        <div className="flex h-[29px] items-center justify-end gap-[1px] pr-[9px] pb-[3px]">
          <span className="text-[12px] leading-4 text-[#001f54]">...</span>
          <button aria-label="Search">
            <svg viewBox="0 0 18 20" className="h-5 w-[18px]" fill="none" stroke="#001f54" aria-hidden="true">
              <circle cx="7.500" cy="7.500" r="6" strokeWidth="2" />
              <path d="M11.500 12.500L17 19" strokeWidth="2.6" />
            </svg>
          </button>
        </div>
        <div className="flex flex-col gap-[9px]">{children}</div>
      </div>
    </section>
  );
}

function DeletedCard() {
  return (
    <article className="flex h-20 bg-white pl-3">
      <div className="pt-[11px]">
        <h3 className="text-[12px] leading-4 text-[#001f54]">Name Suranem</h3>
        <p className="mt-[23px] flex text-[10px] leading-4 text-[#666]">
          <span className="w-24">deleated date</span>
          <time>10.12.2017</time>
        </p>
      </div>
      <Thumb>
        <svg x="23" y="16" width="37" height="37" viewBox="0 0 24 24">
          <path d={PIN_OFF} fill="#001f54" />
        </svg>
      </Thumb>
    </article>
  );
}

function ChatCard({ located }: { located?: boolean }) {
  return (
    <article className="flex h-20 bg-white pl-3">
      <div className="pt-[11px] whitespace-nowrap">
        <h3 className="text-[12px] leading-4 text-[#001f54]">Name Suranem</h3>
        <div className="flex h-[24px] items-center gap-[6px]">
          <svg viewBox="3 3 18 18" className="size-[20px]" fill="#001f54" aria-hidden="true">
            <path d={PHONE} />
          </svg>
          <svg viewBox="0 0 24 24" className="size-[28px]" fill="#001f54" aria-hidden="true">
            <path d={FILM} transform="rotate(-35 12 12) translate(.8 .8) scale(.94)" />
          </svg>
        </div>
        <p className={`text-[10px] leading-4 text-[#666] ${located ? "-mt-px" : "mt-2"}`}>
          Hello safsdaf sdafgsdag sadgsag sa.sadg...
        </p>
      </div>
      <Thumb>
        {located ? (
          <svg x="61" y="44" width="22" height="22" viewBox="0 0 24 24">
            <path d={PIN_ON} fill="#001f54" />
          </svg>
        ) : (
          <svg x="61" y="50" width="21" height="21" viewBox="0 0 24 24">
            <path d={PIN_OFF} fill="#001f54" />
          </svg>
        )}
      </Thumb>
    </article>
  );
}

function Canvas() {
  return (
    <main className="min-w-0 flex-1 overflow-hidden bg-[#ededed] pl-[230px]">
      <div className="h-full w-[661px] border-x border-[#dadada] bg-white pt-[39px]">
        <div className="-mx-px flex gap-[82px]">
          <Screen
            title="Deleated"
            edge="border-l"
            icon={
              <svg viewBox="0 0 16 24" className="ml-[15px] h-6 w-4" fill="#fff" aria-hidden="true">
                <path d="M1.500 0L3.500 1.500L9.500 23L7.500 24L1 1.500Z" />
                <path d="M.8 7L2.600 6.500L6.200 19.800L1.200 21.500Q-.5 14 .8 7Z" />
                <path d="M4.800 3Q12 .5 14.500 6Q17 12 9.800 17.400L8.400 13Q11.500 9.500 9 7L6 7Z" />
              </svg>
            }
          >
            <DeletedCard />
            <DeletedCard />
          </Screen>
          <Screen
            title="Chat"
            edge="border-r"
            icon={
              <svg viewBox="0 0 22 26" className="ml-2 h-[26px] w-[22px]" fill="#fff" aria-hidden="true">
                <path d="M6.500 .5L19 5.500L14.500 17L7 13L4.500 12L0 13Z" />
                <path d="M3.500 14L13 19.500L14.500 20L19.500 12L21.500 13L20 18.500L17 20.500L15 26L13 22L4.500 18Q2 16 3.500 14Z" />
              </svg>
            }
          >
            <ChatCard />
            <ChatCard located />
          </Screen>
        </div>
        <div className="mt-[41px] -ml-px h-14 w-[290px] bg-[#001f54]" />
      </div>
    </main>
  );
}

function Editor() {
  return (
    <div className="flex min-w-0 flex-1 flex-col">
      <TopRuler />
      <div className="flex min-h-0 flex-1">
        <LeftRuler />
        <div className="flex min-w-0 flex-1 flex-col">
          <div className="flex min-h-0 flex-1">
            <Canvas />
            <div className="flex w-[15px] shrink-0 flex-col items-center bg-[#f0f0f0] py-[6px] text-[#505050]">
              <ScrollArrow className="rotate-180" />
              <div className="mt-[276px] h-[108px] w-[11px] bg-[#c1c1c1]" />
              <ScrollArrow className="mt-auto" />
            </div>
          </div>
          <div className="flex h-[15px] shrink-0 bg-white">
            <div className="flex flex-1 items-center bg-[#f0f0f0] px-[3px] text-[#505050]">
              <ScrollArrow className="rotate-90" />
              <div className="ml-[328px] h-[11px] w-[571px] bg-[#c1c1c1]" />
              <ScrollArrow className="ml-auto -rotate-90" />
            </div>
            <div className="w-[15px] shrink-0" />
          </div>
        </div>
      </div>
    </div>
  );
}

export default function App() {
  return (
    <div className="flex h-screen flex-col overflow-hidden font-['Liberation_Sans',Arial,sans-serif]">
      <TopPanel />
      <div className="flex min-h-0 flex-1">
        <Launcher />
        <div className="flex min-w-0 flex-1 flex-col bg-white">
          <TabStrip />
          <AddressBar />
          <AppHeader />
          <div className="flex min-h-0 flex-1">
            <SideNav />
            <Editor />
          </div>
        </div>
      </div>
    </div>
  );
}
